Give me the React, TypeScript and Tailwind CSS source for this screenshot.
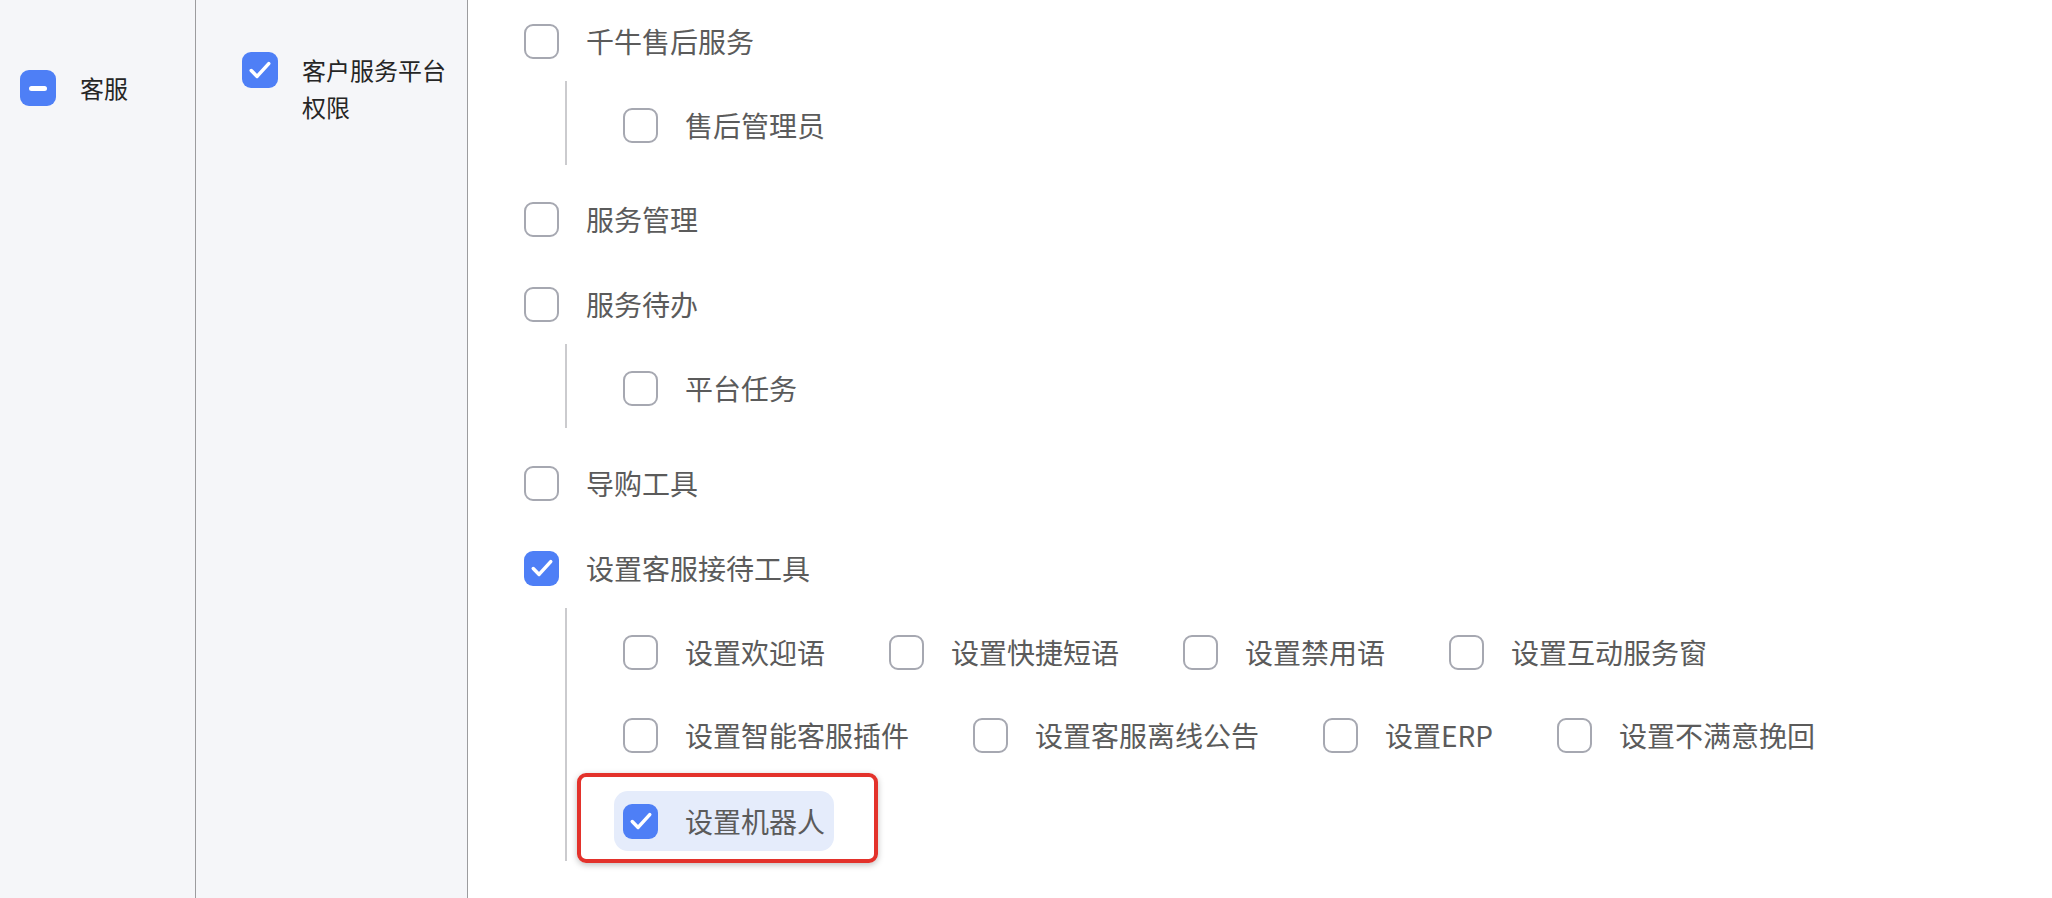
const font = { fontFamily: '"Noto Sans CJK SC", "Noto Sans", sans-serif' }

function Check() {
  return (
    <svg width="28" height="28" viewBox="0 0 24 24" fill="none" stroke="white" strokeWidth="3" strokeLinecap="round" strokeLinejoin="round">
      <path d="M4.5 12.5l5 5 10-11" />
    </svg>
  )
}

function Box({ state }: { state: 'off' | 'on' | 'part' }) {
  if (state === 'off') {
    return <span className="h-[35px] w-[35px] shrink-0 rounded-[9px] border-2 border-[#a6a8b1] bg-white" />
  }
  return (
    <span className="flex h-[35px] w-[35px] shrink-0 items-center justify-center rounded-[9px] bg-[#4e7ff6]">
      {state === 'on' ? <Check /> : <span className="h-[5px] w-[18px] rounded-full bg-white" />}
    </span>
  )
}

function Item({ label, on }: { label: string; on?: boolean }) {
  return (
    <div className="flex h-[44px] items-center gap-[27px]">
      <Box state={on ? 'on' : 'off'} />
      <span className="text-[28px] leading-none text-[#5b5b5b]">{label}</span>
    </div>
  )
}

function Children({ rows, last }: { rows: string[][]; last?: boolean }) {
  return (
    <div className="ml-[41px] mt-[18px] border-l-2 border-[#cbcbce] pl-[56px] pt-[22px] pb-[18px]">
      <div className="flex flex-col gap-[39px]">
        {rows.map((r, i) => (
          <div key={i} className="flex gap-[64px]">
            {r.map((l) => (
              <Item key={l} label={l} />
            ))}
          </div>
        ))}
        {last && (
          <div className="mt-[3px] flex h-[44px] items-center">
            <div className="relative -mx-[9px] flex h-[60px] items-center gap-[27px] rounded-[14px] bg-[#e5ecfb] px-[9px]">
              <Box state="on" />
              <span className="text-[28px] leading-none text-[#5b5b5b]">设置机器人</span>
              <div className="absolute -bottom-[12px] -left-[37px] -right-[44px] -top-[18px] rounded-[9px] border-[4px] border-[#e3322b] shadow-[0_2px_6px_rgba(0,0,0,0.25)]" />
            </div>
          </div>
        )}
      </div>
    </div>
  )
}

export default function App() {
  return (
    <div className="flex h-[898px] w-[2052px] overflow-hidden bg-white" style={font}>
      <div className="w-[196px] shrink-0 border-r border-[#9c9c9f] bg-[#f5f6f9] pl-[20px] pt-[70px]">
        <div className="flex items-center gap-[24px]">
          <span className="flex h-[36px] w-[36px] items-center justify-center rounded-[9px] bg-[#4e7ff6]">
            <span className="h-[5px] w-[18px] rounded-full bg-white" />
          </span>
          <span className="text-[24px] leading-[36px] text-[#262626]">客服</span>
        </div>
      </div>

      <div className="w-[272px] shrink-0 border-r border-[#9c9c9f] bg-[#f5f6f9] pl-[46px] pt-[52px]">
        <div className="flex items-start gap-[24px]">
          <span className="flex h-[36px] w-[36px] shrink-0 items-center justify-center rounded-[9px] bg-[#4e7ff6]">
            <Check />
          </span>
          <span className="-mt-[1px] w-[150px] text-[24px] leading-[37px] text-[#262626]">客户服务平台权限</span>
        </div>
      </div>

      <div className="flex-1 pl-[56px] pt-[19px]">
        <Item label="千牛售后服务" />
        <Children rows={[['售后管理员']]} />
        <div className="mt-[32px]">
          <Item label="服务管理" />
        </div>
        <div className="mt-[41px]">
          <Item label="服务待办" />
        </div>
        <Children rows={[['平台任务']]} />
        <div className="mt-[33px]">
          <Item label="导购工具" />
        </div>
        <div className="mt-[41px]">
          <Item label="设置客服接待工具" on />
        </div>
        <Children
          last
          rows={[
            ['设置欢迎语', '设置快捷短语', '设置禁用语', '设置互动服务窗'],
            ['设置智能客服插件', '设置客服离线公告', '设置ERP', '设置不满意挽回'],
          ]}
        />
      </div>
    </div>
  )
}
